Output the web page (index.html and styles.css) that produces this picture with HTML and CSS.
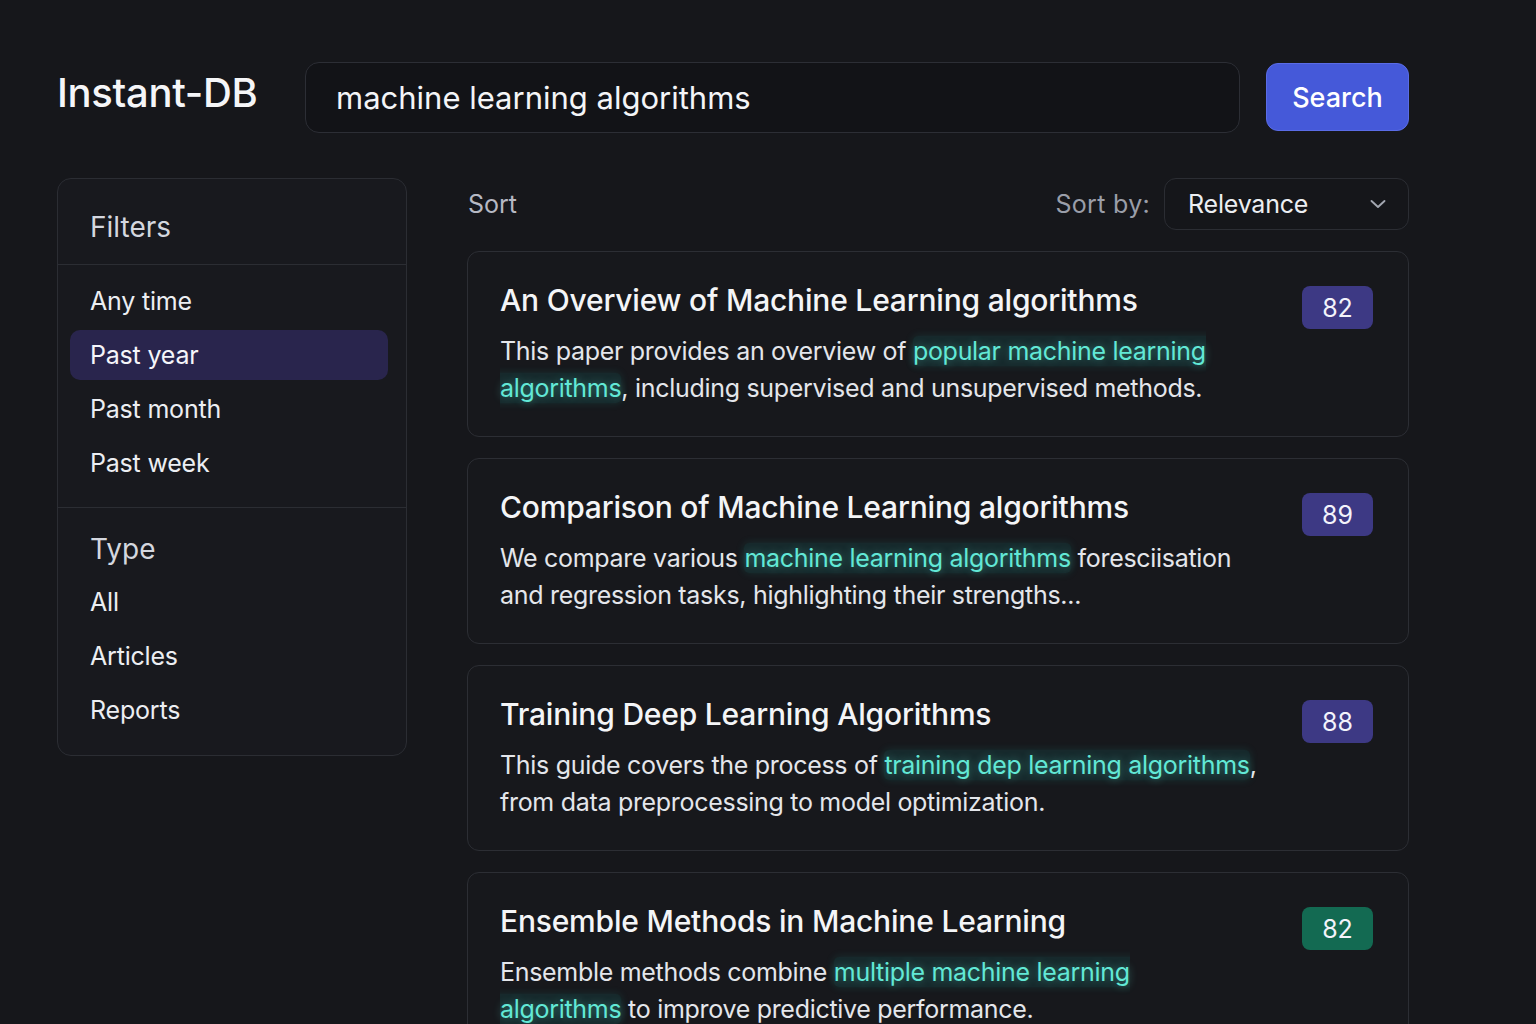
FILE: index.html
```html
<!DOCTYPE html>
<html lang="en">
<head>
<meta charset="utf-8">
<title>Instant-DB</title>
<link rel="stylesheet" href="styles.css">
</head>
<body>
<div class="page">
  <header class="top">
    <div class="logo">Instant-DB</div>
    <div class="search-input">machine learning algorithms</div>
    <button class="search-btn">Search</button>
  </header>
  <div class="layout">
    <aside class="sidebar">
      <div class="side-head">Filters</div>
      <div class="time-list">
        <div class="opt">Any time</div>
        <div class="opt active">Past year</div>
        <div class="opt">Past month</div>
        <div class="opt">Past week</div>
      </div>
      <div class="type-list">
        <div class="type-head">Type</div>
        <div class="type-opt">All</div>
        <div class="type-opt">Articles</div>
        <div class="type-opt">Reports</div>
      </div>
    </aside>
    <main class="results">
      <div class="sort-row">
        <div class="sort-label">Sort</div>
        <div class="sort-by">
          <span class="sort-by-label">Sort by:</span>
          <div class="select">
            <span>Relevance</span>
            <svg class="chev" width="20" height="20" viewBox="0 0 20 20"><path d="M3.5 7 L10 13 L16.5 7" fill="none" stroke="#a3a7b1" stroke-width="1.9" stroke-linecap="round" stroke-linejoin="round"/></svg>
          </div>
        </div>
      </div>
      <div class="cards">
        <article class="card">
          <div class="card-body">
            <h2 class="title">An Overview of Machine Learning algorithms</h2>
            <p class="desc">This paper provides an overview of <mark class="hl">popular machine learning algorithms</mark>, including supervised and unsupervised methods.</p>
          </div>
          <div class="badge">82</div>
        </article>
        <article class="card">
          <div class="card-body">
            <h2 class="title">Comparison of Machine Learning algorithms</h2>
            <p class="desc">We compare various <mark class="hl">machine learning algorithms</mark> foresciisation and regression tasks, highlighting their strengths...</p>
          </div>
          <div class="badge">89</div>
        </article>
        <article class="card">
          <div class="card-body">
            <h2 class="title">Training Deep Learning Algorithms</h2>
            <p class="desc">This guide covers the process of <mark class="hl">training dep learning algorithms</mark>, from data preprocessing to model optimization.</p>
          </div>
          <div class="badge">88</div>
        </article>
        <article class="card">
          <div class="card-body">
            <h2 class="title">Ensemble Methods in Machine Learning</h2>
            <p class="desc">Ensemble methods combine <mark class="hl">multiple machine learning<br>algorithms</mark> to improve predictive performance.</p>
          </div>
          <div class="badge green">82</div>
        </article>
      </div>
    </main>
  </div>
</div>
</body>
</html>
```
FILE: styles.css
```css
* { box-sizing: border-box; }
html, body { margin: 0; padding: 0; }
body {
  background: #16171b;
  color: #eceef2;
  font-family: Inter, "Noto Sans", "Liberation Sans", sans-serif;
  height: 1024px;
  overflow: hidden;
}
.page {
  width: 1352px;
  margin-left: 57px;
  padding-top: 62px;
}
.top {
  display: flex;
  align-items: center;
  height: 70px;
}
.logo {
  font-size: 40px;
  line-height: 48px;
  font-weight: 500;
  color: #f5f6f8;
  width: 248px;
  letter-spacing: -0.3px;
  margin-top: -8px;
}
.search-input {
  flex: 1;
  height: 71px;
  border: 1.5px solid #2c2e35;
  border-radius: 14px;
  background: #121317;
  display: flex;
  align-items: center;
  padding-left: 30px;
  font-size: 31px;
  color: #f4f5f7;
}
.search-btn {
  margin-left: 26px;
  width: 143px;
  height: 68px;
  border: 1px solid #5a6ce6;
  border-radius: 12px;
  background: #4559d9;
  color: #ffffff;
  font-family: inherit;
  font-size: 27px;
  font-weight: 500;
}
.layout {
  display: flex;
  align-items: flex-start;
  margin-top: 46px;
  gap: 60px;
}
.sidebar {
  width: 350px;
  border: 1.5px solid #2b2d33;
  border-radius: 14px;
  background: #18191e;
}
.side-head {
  padding: 31px 32px 20px;
  font-size: 28px;
  line-height: 34px;
  color: #d4d7df;
  border-bottom: 1.5px solid #2b2d33;
}
.time-list {
  display: flex;
  flex-direction: column;
  gap: 4px;
  padding: 11px 18px 19px 12px;
  border-bottom: 1.5px solid #2b2d33;
}
.opt {
  height: 50px;
  display: flex;
  align-items: center;
  padding-left: 20px;
  font-size: 25px;
  color: #eceef2;
  border-radius: 10px;
  letter-spacing: -0.2px;
}
.opt.active {
  background: #29254d;
  color: #f5f5fa;
}
.type-list {
  padding: 16px 18px 19px 32px;
}
.type-head {
  height: 50px;
  display: flex;
  align-items: center;
  font-size: 28px;
  color: #d4d7df;
}
.type-opt {
  height: 54px;
  padding-top: 2px;
  display: flex;
  align-items: center;
  font-size: 25px;
  color: #eceef2;
  letter-spacing: -0.2px;
}
.results {
  width: 942px;
}
.sort-row {
  display: flex;
  align-items: center;
  justify-content: space-between;
  height: 51px;
}
.sort-label {
  font-size: 25px;
  color: #b6b9c3;
  padding-left: 1px;
}
.sort-by {
  display: flex;
  align-items: center;
  gap: 14px;
}
.sort-by-label {
  font-size: 25px;
  color: #9a9ea9;
  letter-spacing: 0.3px;
}
.select {
  width: 245px;
  height: 52px;
  border: 1.5px solid #2b2d33;
  border-radius: 12px;
  background: #15161a;
  display: flex;
  align-items: center;
  justify-content: space-between;
  padding: 0 20px 0 23px;
  font-size: 25px;
  color: #eceef2;
  letter-spacing: -0.2px;
}
.chev { display: block; }
.cards {
  display: flex;
  flex-direction: column;
  gap: 21px;
  margin-top: 22px;
}
.card {
  display: flex;
  align-items: flex-start;
  gap: 22px;
  min-height: 186px;
  border: 1.5px solid #2c2e34;
  border-radius: 12px;
  background: #17181c;
  padding: 28px 35px 28px 32px;
}
.card-body { flex: 1; }
.title {
  margin: 0;
  font-size: 30px;
  line-height: 40px;
  font-weight: 500;
  color: #f4f5f7;
  letter-spacing: -0.2px;
}
.desc {
  margin: 13px 0 0;
  font-size: 25px;
  line-height: 37px;
  color: #e4e6eb;
  letter-spacing: -0.3px;
}
.hl {
  color: #62e8d6;
  background: rgba(30, 150, 140, 0.14);
  border-radius: 5px;
  box-shadow: 0 0 8px rgba(40, 180, 165, 0.16);
  text-shadow: 0 0 8px rgba(90, 230, 210, 0.45);
}
.badge {
  flex: none;
  width: 71px;
  height: 43px;
  margin-top: 6px;
  border-radius: 8px;
  background: #3d3984;
  color: #f3f3fb;
  font-size: 25px;
  display: flex;
  align-items: center;
  justify-content: center;
}
.badge.green { background: #136a52; }
```
